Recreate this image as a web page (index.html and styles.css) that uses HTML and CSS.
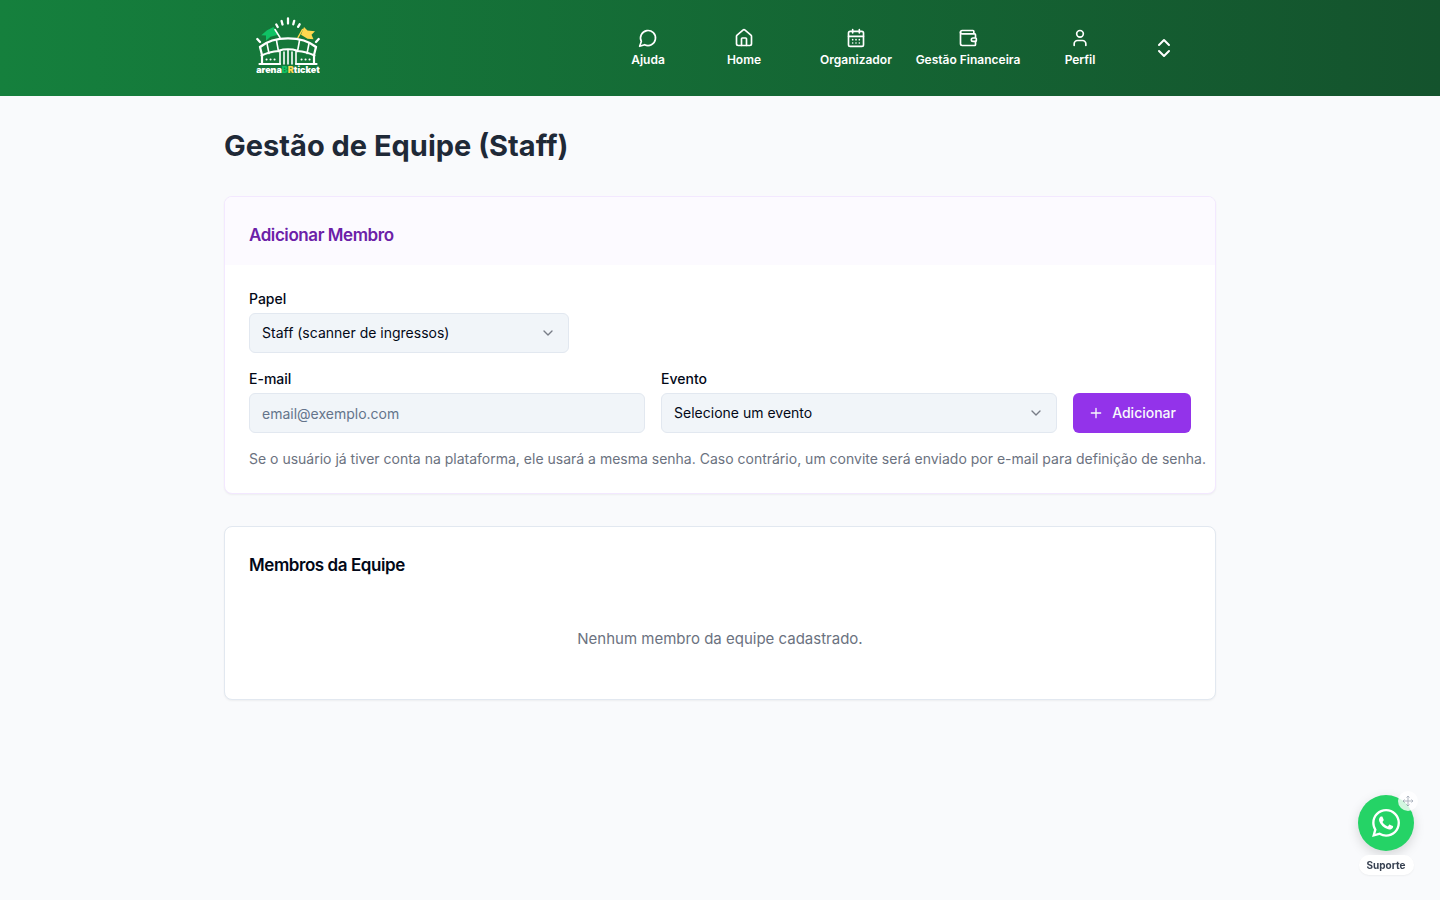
FILE: index.html
```html
<!DOCTYPE html>
<html lang="pt-BR">
<head>
<meta charset="utf-8">
<meta name="viewport" content="width=device-width, initial-scale=1">
<title>Gestão de Equipe (Staff)</title>
<link rel="stylesheet" href="styles.css">
</head>
<body>
<header class="topbar">
  <div class="topbar-inner">
    <a class="logo" href="#" aria-label="arenaBRticket">
      <svg width="64" height="64" viewBox="0 0 64 64" fill="none" stroke="#fff" stroke-linecap="round" stroke-linejoin="round">
        <path d="M1.300 23l2.700 3M62.700 23l-2.700 3M20.300 8.500l1.400 2.500M25.600 5l.9 3.500M32 2.500v5M38.200 4.800l-.9 3.500M43.600 8.300l-1.500 2.500" stroke-width="2.300"/>
        <path d="M17.500 11L11 14.300 5.300 19.300l4.700.3V24.700l4.500-4 7.500-2z" fill="#10c264" stroke="none"/>
        <path d="M19 13.500l5 8" stroke-width="1.500"/>
        <path d="M48 11l3.500 3.500 7.500.8-3.500 3.500 2 4.400-6-.4-6.500-4z" fill="#ffd84f" stroke="none"/>
        <path d="M46.500 13.500l-4.500 8" stroke="#ffd84f" stroke-width="1.500"/>
        <path d="M4 31c14-11.500 42-11.500 56 0" stroke-width="2.400"/>
        <path d="M4 31l2 8v8.500M60 31l-2 8v8.500" stroke-width="2.200"/>
        <path d="M11 27.500l2 10M53 27.500l-2 10M20.500 24.500l2 11M43.500 24.500l-2 11" stroke-width="1.600"/>
        <path d="M5.500 39.500c5-2.500 11-4 17.500-4.500M58.500 39.500c-5-2.500-11-4-17.500-4.500M23.500 34.500c4-1.600 13-1.600 17 0" stroke-width="2"/>
        <path d="M3.500 48h20.500M40 48h20.500" stroke-width="2.200"/>
        <path d="M24 35v13M28 36v12M36 36v12M40 35v13M32 34v14" stroke-width="1.600"/>
        <path d="M10.500 43.500h.1M14.500 43.500h.1M18.500 43.500h.1M45.500 43.500h.1M49.500 43.500h.1M53.500 43.500h.1" stroke-width="2"/>
        <text class="logo-text" x="32" y="57" text-anchor="middle">arena<tspan class="logo-b">B</tspan><tspan class="logo-r">R</tspan>ticket</text>
      </svg>
    </a>
    <nav class="nav">
      <a class="nav-item nav-short" href="#"><svg class="icon" viewBox="0 0 24 24"><path d="M7.900 20A9 9 0 1 0 4 16.100L2 22Z"/></svg>Ajuda</a>
      <a class="nav-item nav-short" href="#"><svg class="icon" viewBox="0 0 24 24"><path d="M15 21v-8a1 1 0 0 0-1-1h-4a1 1 0 0 0-1 1v8"/><path d="M3 10a2 2 0 0 1 .709-1.528l7-5.999a2 2 0 0 1 2.582 0l7 5.999A2 2 0 0 1 21 10v9a2 2 0 0 1-2 2H5a2 2 0 0 1-2-2z"/></svg>Home</a>
      <a class="nav-item nav-gap" href="#"><svg class="icon" viewBox="0 0 24 24"><path d="M8 2v4M16 2v4"/><rect width="18" height="18" x="3" y="4" rx="2"/><path d="M3 10h18M8 14h.01M12 14h.01M16 14h.01M8 18h.01M12 18h.01M16 18h.01"/></svg>Organizador</a>
      <a class="nav-item" href="#"><svg class="icon" viewBox="0 0 24 24"><path d="M19 7V4a1 1 0 0 0-1-1H5a2 2 0 0 0 0 4h15a1 1 0 0 1 1 1v4h-3a2 2 0 0 0 0 4h3a1 1 0 0 0 1-1v-2a1 1 0 0 0-1-1"/><path d="M3 5v14a2 2 0 0 0 2 2h15a1 1 0 0 0 1-1v-4"/></svg>Gestão Financeira</a>
      <a class="nav-item" href="#"><svg class="icon" viewBox="0 0 24 24"><path d="M19 21v-2a4 4 0 0 0-4-4H9a4 4 0 0 0-4 4v2"/><circle cx="12" cy="7" r="4"/></svg>Perfil</a>
      <button class="nav-toggle" type="button" aria-label="Alternar menu"><svg class="icon" viewBox="0 0 24 24"><path d="m7 15 5 5 5-5M7 9l5-5 5 5"/></svg></button>
    </nav>
  </div>
</header>

<main class="page">
  <h1 class="page-title">Gestão de Equipe (Staff)</h1>

  <section class="card card-accent">
    <div class="card-header">
      <h2 class="card-title">Adicionar Membro</h2>
    </div>
    <form class="member-form">
      <div class="field field-role">
        <label for="role">Papel</label>
        <div class="select">
          <select id="role"><option>Staff (scanner de ingressos)</option></select>
          <svg class="chevron" viewBox="0 0 24 24"><path d="m6 9 6 6 6-6"/></svg>
        </div>
      </div>
      <div class="form-row">
        <div class="field">
          <label for="email">E-mail</label>
          <input id="email" type="email" placeholder="email@exemplo.com">
        </div>
        <div class="field">
          <label for="event">Evento</label>
          <div class="select">
            <select id="event"><option>Selecione um evento</option></select>
            <svg class="chevron" viewBox="0 0 24 24"><path d="m6 9 6 6 6-6"/></svg>
          </div>
        </div>
        <button class="add-button" type="button"><svg class="plus" viewBox="0 0 24 24"><path d="M5 12h14M12 5v14"/></svg>Adicionar</button>
      </div>
      <p class="hint">Se o usuário já tiver conta na plataforma, ele usará a mesma senha. Caso contrário, um convite será enviado por e-mail para definição de senha.</p>
    </form>
  </section>

  <section class="card members">
    <h2 class="card-title">Membros da Equipe</h2>
    <p class="empty">Nenhum membro da equipe cadastrado.</p>
  </section>
</main>

<div class="support">
  <a class="support-button" href="#" aria-label="Suporte via WhatsApp">
    <svg width="28" height="28" viewBox="0 0 24 24" fill="#fff"><path d="M17.472 14.382c-.297-.149-1.758-.867-2.030-.967-.273-.099-.471-.148-.670.150-.197.297-.767.966-.940 1.164-.173.199-.347.223-.644.075-.297-.150-1.255-.463-2.390-1.475-.883-.788-1.480-1.761-1.653-2.059-.173-.297-.018-.458.130-.606.134-.133.298-.347.446-.520.149-.174.198-.298.298-.497.099-.198.050-.371-.025-.520-.075-.149-.669-1.612-.916-2.207-.242-.579-.487-.500-.669-.510-.173-.008-.371-.010-.570-.010-.198 0-.520.074-.792.372-.272.297-1.040 1.016-1.040 2.479 0 1.462 1.065 2.875 1.213 3.074.149.198 2.096 3.200 5.077 4.487.709.306 1.262.489 1.694.625.712.227 1.360.195 1.871.118.571-.085 1.758-.719 2.006-1.413.248-.694.248-1.289.173-1.413-.074-.124-.272-.198-.570-.347m-5.421 7.403h-.004a9.870 9.870 0 01-5.031-1.378l-.361-.214-3.741.982.998-3.648-.235-.374a9.860 9.860 0 01-1.510-5.260c.001-5.450 4.436-9.884 9.888-9.884 2.640 0 5.122 1.030 6.988 2.898a9.825 9.825 0 012.893 6.994c-.003 5.450-4.437 9.884-9.885 9.884m8.413-18.297A11.815 11.815 0 0012.050 0C5.495 0 .160 5.335.157 11.892c0 2.096.547 4.142 1.588 5.945L.057 24l6.305-1.654a11.882 11.882 0 005.683 1.448h.005c6.554 0 11.890-5.335 11.893-11.893a11.821 11.821 0 00-3.480-8.413z"/></svg>
  </a>
  <span class="drag-badge"><svg viewBox="0 0 24 24"><path d="M12 2v20M15 19l-3 3-3-3M19 9l3 3-3 3M2 12h20M5 9l-3 3 3 3M9 5l3-3 3 3"/></svg></span>
  <span class="support-label">Suporte</span>
</div>
</body>
</html>
```
FILE: styles.css
```css
*, *::before, *::after { box-sizing: border-box; }

body {
  margin: 0;
  min-height: 100vh;
  background: #f9fafc;
  color: #020817;
  font-family: Inter, "Liberation Sans", sans-serif;
  font-size: 14px;
  line-height: 20px;
}

h1, h2, p { margin: 0; }
a { color: inherit; text-decoration: none; }
button, input, select { font: inherit; color: inherit; }

.topbar {
  background: linear-gradient(to right, #15803d, #14532d);
  color: #fff;
}
.topbar-inner {
  display: flex;
  align-items: center;
  justify-content: space-between;
  max-width: 1024px;
  height: 96px;
  margin: 0 auto;
  padding: 0 48px;
}
.logo, .logo svg { display: block; }
.logo-text { font-size: 9px; font-weight: 900; fill: #fff; stroke: none; }
.logo-text .logo-b { fill: #10c264; }
.logo-text .logo-r { fill: #ffd84f; }

.nav { display: flex; align-items: center; }
.nav-item {
  display: flex;
  flex-direction: column;
  align-items: center;
  gap: 4px;
  width: 112px;
  font-size: 12px;
  font-weight: 600;
  line-height: 16px;
  white-space: nowrap;
}
.nav-short { width: 96px; }
.nav-gap { margin-left: 8px; }
.icon, .chevron, .plus {
  display: block;
  fill: none;
  stroke: currentColor;
  stroke-width: 2;
  stroke-linecap: round;
  stroke-linejoin: round;
}
.icon { width: 20px; height: 20px; }
.nav-toggle {
  display: grid;
  place-items: center;
  width: 40px;
  height: 40px;
  margin-left: 8px;
  padding: 0;
  border: 0;
  background: none;
}
.nav-toggle .icon { width: 24px; height: 24px; }

.page {
  max-width: 1024px;
  margin: 0 auto;
  padding: 32px 16px;
}
.page-title {
  margin-bottom: 32px;
  color: #1f2937;
  font-size: 29px;
  font-weight: 700;
  line-height: 36px;
}

.card {
  margin-bottom: 32px;
  border: 1px solid #e2e8f0;
  border-radius: 8px;
  background: #fff;
  box-shadow: 0 1px 2px rgba(0, 0, 0, 0.05);
}
.card-accent { border-color: #f3e8ff; }
.card-header {
  padding: 24px 24px 16px;
  border-radius: 7px 7px 0 0;
  background: #fcfaff;
}
.card-title {
  font-size: 17px;
  font-weight: 600;
  line-height: 28px;
  letter-spacing: -0.025em;
}
.card-accent .card-title { color: #6b21a8; }

.member-form {
  display: flex;
  flex-direction: column;
  gap: 16px;
  padding: 24px;
}
.form-row {
  display: grid;
  grid-template-columns: 1fr 1fr auto;
  align-items: end;
  gap: 16px;
}
.field { display: flex; flex-direction: column; gap: 4px; min-width: 0; }
.field-role { width: 100%; max-width: 320px; }
.field label { font-weight: 500; }
.field input, .field select {
  width: 100%;
  height: 40px;
  padding: 0 12px;
  border: 1px solid #e2e8f0;
  border-radius: 6px;
  background: #f1f5f9;
}
.field input::placeholder { color: #64748b; opacity: 1; }
.field select { appearance: none; }
.select { position: relative; }
.chevron {
  position: absolute;
  top: 12px;
  right: 13px;
  width: 16px;
  height: 16px;
  opacity: 0.5;
  pointer-events: none;
}
.add-button {
  display: flex;
  align-items: center;
  gap: 8px;
  height: 40px;
  padding: 0 15px;
  border: 0;
  border-radius: 6px;
  background: #9333ea;
  color: #f8fafc;
  font-weight: 500;
}
.plus { width: 16px; height: 16px; }
.hint { color: #6b7280; }
@media (min-width: 1024px) {
  .hint { white-space: nowrap; }
}

.members { padding: 24px; }
.empty {
  padding: 48px 0 24px;
  color: #6b7280;
  font-size: 15px;
  line-height: 24px;
  text-align: center;
}

.support {
  position: fixed;
  right: 26px;
  bottom: 25px;
  display: flex;
  flex-direction: column;
  align-items: center;
  gap: 4px;
}
.support-button {
  display: grid;
  place-items: center;
  width: 56px;
  height: 56px;
  border-radius: 50%;
  background: #25d366;
  box-shadow: 0 4px 12px rgba(0, 0, 0, 0.15);
}
.drag-badge {
  position: absolute;
  top: -4px;
  right: -4px;
  display: grid;
  place-items: center;
  width: 20px;
  height: 20px;
  border-radius: 50%;
  background: #fff;
  opacity: 0.8;
}
.drag-badge svg {
  width: 12px;
  height: 12px;
  fill: none;
  stroke: #9ca3af;
  stroke-width: 2;
}
.support-label {
  padding: 2px 8px;
  border-radius: 10px;
  background: #fff;
  box-shadow: 0 1px 2px rgba(0, 0, 0, 0.05);
  color: #374151;
  font-size: 10px;
  font-weight: 700;
  line-height: 16px;
}
```
